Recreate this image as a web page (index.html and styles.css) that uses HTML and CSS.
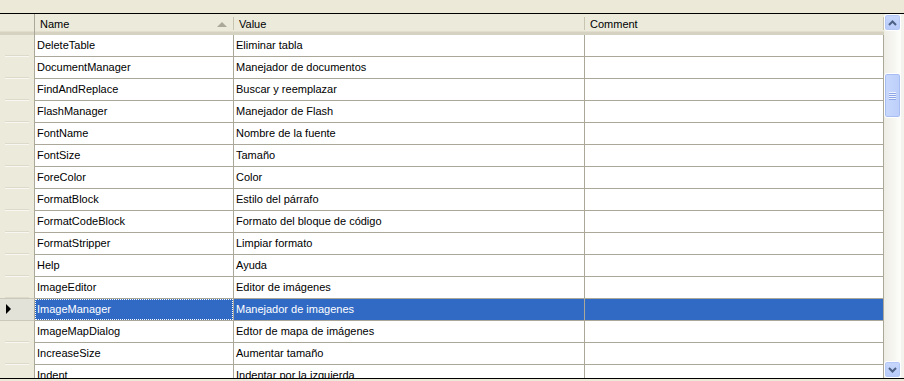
FILE: index.html
```html
<!DOCTYPE html>
<html lang="en">
  <head>
    <meta charset="UTF-8" />
    <title>Localization grid</title>
    <link rel="stylesheet" href="styles.css">
  </head>
  <body>
    <div class="frame">
      <div class="grid">
        <div class="head corner"></div>
        <div class="head">Name<span class="sort"></span></div>
        <div class="head">Value</div>
        <div class="head">Comment</div>

        <div class="rowhead"></div><div class="cell">DeleteTable</div><div class="cell">Eliminar tabla</div><div class="cell"></div>
        <div class="rowhead"></div><div class="cell">DocumentManager</div><div class="cell">Manejador de documentos</div><div class="cell"></div>
        <div class="rowhead"></div><div class="cell">FindAndReplace</div><div class="cell">Buscar y reemplazar</div><div class="cell"></div>
        <div class="rowhead"></div><div class="cell">FlashManager</div><div class="cell">Manejador de Flash</div><div class="cell"></div>
        <div class="rowhead"></div><div class="cell">FontName</div><div class="cell">Nombre de la fuente</div><div class="cell"></div>
        <div class="rowhead"></div><div class="cell">FontSize</div><div class="cell">Tamaño</div><div class="cell"></div>
        <div class="rowhead"></div><div class="cell">ForeColor</div><div class="cell">Color</div><div class="cell"></div>
        <div class="rowhead"></div><div class="cell">FormatBlock</div><div class="cell">Estilo del párrafo</div><div class="cell"></div>
        <div class="rowhead"></div><div class="cell">FormatCodeBlock</div><div class="cell">Formato del bloque de código</div><div class="cell"></div>
        <div class="rowhead"></div><div class="cell">FormatStripper</div><div class="cell">Limpiar formato</div><div class="cell"></div>
        <div class="rowhead"></div><div class="cell">Help</div><div class="cell">Ayuda</div><div class="cell"></div>
        <div class="rowhead"></div><div class="cell">ImageEditor</div><div class="cell">Editor de imágenes</div><div class="cell"></div>
        <div class="rowhead current"><span class="pointer"></span></div><div class="cell selected focus"><span>ImageManager</span></div><div class="cell selected">Manejador de imagenes</div><div class="cell selected"></div>
        <div class="rowhead"></div><div class="cell">ImageMapDialog</div><div class="cell">Edtor de mapa de imágenes</div><div class="cell"></div>
        <div class="rowhead"></div><div class="cell">IncreaseSize</div><div class="cell">Aumentar tamaño</div><div class="cell"></div>
        <div class="rowhead"></div><div class="cell">Indent</div><div class="cell">Indentar por la izquierda</div><div class="cell"></div>
      </div>

      <div class="vscroll">
        <div class="sbtn">
          <svg width="9" height="6" viewBox="0 0 9 6"><path d="M1 5 L4.5 1.5 L8 5" fill="none" stroke="#4d6185" stroke-width="2"/></svg>
        </div>
        <div class="track">
          <div class="thumb">
            <span class="grip"></span>
          </div>
        </div>
        <div class="sbtn">
          <svg width="9" height="6" viewBox="0 0 9 6"><path d="M1 1 L4.5 4.5 L8 1" fill="none" stroke="#4d6185" stroke-width="2"/></svg>
        </div>
      </div>
    </div>
  </body>
</html>
```

FILE: styles.css
```css
/* XP style data grid */
* {
  box-sizing: border-box;
}

body {
  margin: 0;
  height: 381px;
  padding-top: 13px;
  background: #ece9d8;
  font-family: "Liberation Sans", Arial, sans-serif;
  font-size: 11px;
  color: #000;
  overflow: hidden;
}

.frame {
  display: flex;
  height: 366px;
  border-top: 1px solid #000;
  border-bottom: 1px solid #000;
  background: #fff;
  padding-right: 3px;
  box-shadow: inset -3px 0 0 #f4f3ee;
}

.grid {
  width: 884px;
  overflow: hidden;
  display: grid;
  grid-template-columns: 35px 199px 351px 299px;
  grid-auto-rows: 22px;
  grid-template-rows: 21px;
  align-content: start;
}

/* header */
.head {
  position: relative;
  background: #ebeadb;
  border-bottom: 3px solid #d6d2c2;
  box-shadow: inset 0 -1px 0 #e2decd;
  padding-left: 5px;
  padding-top: 1px;
  line-height: 18px;
}

.head::after {
  content: "";
  position: absolute;
  right: 0;
  top: 3px;
  bottom: 2px;
  width: 1px;
  background: #c7c5b2;
  box-shadow: 1px 0 0 #fff;
}

.corner {
  border-bottom-color: #d6d2c2;
}

.corner::after {
  top: 0;
  bottom: -3px;
  background: #aca899;
  box-shadow: none;
}

.sort {
  position: absolute;
  right: 7px;
  top: 8px;
  width: 0;
  height: 0;
  border-left: 5px solid transparent;
  border-right: 5px solid transparent;
  border-bottom: 5px solid #aca899;
}

/* rows */
.rowhead {
  position: relative;
  background: #ebeadb;
  border-right: 1px solid #aca899;
}

.rowhead::after {
  content: "";
  position: absolute;
  left: 5px;
  right: 5px;
  bottom: 0;
  height: 1px;
  background: #f8f7f2;
  box-shadow: 0 -1px 0 #dcdacb;
}

.rowhead.current {
  background: #e3e2d8;
  border-top: 1px solid #cbc9ba;
  border-bottom: 1px solid #cbc9ba;
  margin-top: -1px;
}

.rowhead.current::after {
  display: none;
}

.pointer {
  position: absolute;
  left: 6px;
  top: 5px;
  width: 0;
  height: 0;
  border-top: 5px solid transparent;
  border-bottom: 5px solid transparent;
  border-left: 5px solid #000;
}

.cell {
  border-right: 1px solid #aca899;
  border-bottom: 1px solid #aca899;
  padding-left: 2px;
  line-height: 21px;
  white-space: nowrap;
  overflow: hidden;
}

.cell.selected {
  background: #316ac5;
  color: #fff;
}

.cell.focus {
  padding: 0;
}

.cell.focus span {
  display: block;
  height: 21px;
  line-height: 19px;
  padding-left: 1px;
  border: 1px dotted #000;
  outline: 1px dotted #fff;
  outline-offset: -1px;
}

/* scrollbar */
.vscroll {
  width: 17px;
  display: flex;
  flex-direction: column;
  background: linear-gradient(to right, #eeede5, #fdfdfa);
}

.sbtn {
  height: 17px;
  flex: none;
  display: flex;
  align-items: center;
  justify-content: center;
  border: 1px solid #fff;
  border-radius: 3px;
  background: linear-gradient(#c8d7fc, #b7cbf9);
  box-shadow: inset 0 0 0 1px #b4c8f6;
}

.track {
  flex: 1;
}

.thumb {
  margin-top: 42px;
  height: 45px;
  display: flex;
  align-items: center;
  justify-content: center;
  border-radius: 3px;
  border: 1px solid #fff;
  background: linear-gradient(to right, #c9d8fc, #bccffa);
  box-shadow: inset 0 0 0 1px #a8bef2;
}

.grip {
  width: 7px;
  height: 8px;
  background: repeating-linear-gradient(#eef3fe 0 1px, #8ca6e8 1px 2px);
}
```
